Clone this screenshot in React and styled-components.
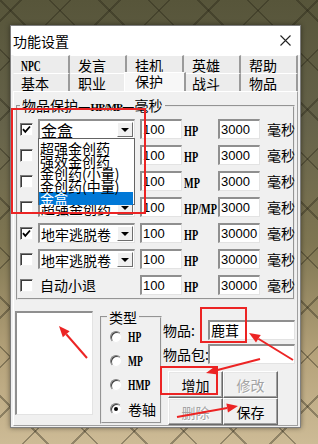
import React from 'react'
import styled, { createGlobalStyle } from 'styled-components'

const CJK = '"Noto Sans CJK SC", "Noto Sans", sans-serif'
const LATIN = '"Liberation Sans", Arial, sans-serif'
const BITMAP = '"Liberation Serif", "Times New Roman", serif'
const RED = '#ec2424'

const GlobalStyle = createGlobalStyle`
  html, body { margin: 0; padding: 0; }
  body {
    width: 318px;
    height: 444px;
    overflow: hidden;
    font-family: ${CJK};
    color: #000;
    background:
      repeating-linear-gradient(45deg, transparent 0 33px, rgba(35, 32, 18, 0.35) 33px 35px),
      repeating-linear-gradient(-45deg, transparent 0 33px, rgba(35, 32, 18, 0.35) 33px 35px),
      linear-gradient(180deg, #57553a 0%, #66634a 28%, #7f7652 55%, #b5a27a 80%, #cdbb96 100%);
  }
`

const Page = styled.div`
  position: relative;
  box-sizing: border-box;
  width: 318px;
  height: 444px;
  padding: 25px 0 0 10px;
`

const Window = styled.div`
  box-sizing: border-box;
  width: 291px;
  height: 403px;
  display: flex;
  flex-direction: column;
  background: #f0f0f0;
  border: 1px solid #7f7f7f;
  box-shadow: 0 0 5px rgba(0, 0, 0, 0.45);
`

const TitleBar = styled.div`
  flex: none;
  height: 29px;
  display: flex;
  align-items: center;
  justify-content: space-between;
  padding: 0 9px 0 2px;
  background: #fff;
`

const Title = styled.div`
  font-size: 14px;
  line-height: 16px;
  margin-top: 1px;
`

const Tabs = styled.div`
  flex: none;
  padding: 0 2px;
`

const TabRow = styled.div`
  display: flex;
  height: 18px;
`

const Tab = styled.div`
  position: relative;
  z-index: ${p => (p.$active ? 1 : 0)};
  box-sizing: border-box;
  flex: none;
  width: ${p => (p.$active ? 62 : 57)}px;
  height: ${p => (p.$active ? 19 : 18)}px;
  margin: ${p => (p.$active ? '-1px -2px 0 -3px' : '0')};
  padding: ${p => (p.$active ? '0 0 0 10px' : '1px 0 0 7px')};
  border-top: 1px solid #fff;
  border-left: 1px solid ${p => (p.$active ? '#fff' : 'transparent')};
  border-right: 2px solid #9a9a9a;
  background: ${p => (p.$active ? '#f7f7f7' : '#ececec')};
  font-size: 14px;
  line-height: 16px;
  white-space: nowrap;
`

const Latin = styled.span`
  display: inline-block;
  font-family: ${BITMAP};
  font-weight: bold;
  font-size: ${p => p.$size || 15}px;
  line-height: 15px;
  white-space: nowrap;
  transform: scaleX(0.68);
  transform-origin: left center;
`

const SmallLatin = styled.span`
  font-family: ${BITMAP};
  font-weight: bold;
  font-size: 11px;
  letter-spacing: -0.8px;
`

const Panel = styled.div`
  flex: 1;
  margin: 0 2px 3px;
  padding: 0 2px;
  border: 1px solid;
  border-color: #fff #a0a0a0 #a0a0a0 #fff;
`

const Group = styled.fieldset`
  margin: 5px 0 0;
  padding: 1px 0 0 2px;
  border: 2px groove #e8e8e8;
  min-width: 0;
`

const Legend = styled.legend`
  padding: 0 2px;
  margin-left: ${p => p.$shift || 0}px;
  font-size: 14px;
  line-height: 16px;
  white-space: nowrap;
`

const Row = styled.div`
  display: flex;
  align-items: center;
  height: 26px;
  white-space: nowrap;
`

const CheckBox = styled.span`
  box-sizing: border-box;
  flex: none;
  width: 13px;
  height: 13px;
  margin-right: 5px;
  display: flex;
  align-items: center;
  justify-content: center;
  background: #fff;
  border: 1px solid;
  border-color: #7a7a7a #f2f2f2 #f2f2f2 #7a7a7a;
  box-shadow: inset 1px 1px 0 #3c3c3c;
`

const Combo = styled.div`
  position: relative;
  box-sizing: border-box;
  flex: none;
  width: 97px;
  height: 20px;
  margin-right: 5px;
  display: flex;
  align-items: center;
  justify-content: space-between;
  padding: 0 1px;
  background: #fff;
  border-style: solid;
  border-width: 2px 1px 1px 2px;
  border-color: #8f8f8f #e3e3e3 #e3e3e3 #8f8f8f;
  font-size: ${p => p.$size || 14}px;
  line-height: 16px;
  white-space: nowrap;
`

const ComboButton = styled.span`
  box-sizing: border-box;
  flex: none;
  width: 16px;
  height: 15px;
  display: flex;
  align-items: center;
  justify-content: center;
  background: #f0f0f0;
  border: 1px solid;
  border-color: #fff #6e6e6e #6e6e6e #fff;

  &::after {
    content: '';
    border-top: 4px solid #000;
    border-left: 4px solid transparent;
    border-right: 4px solid transparent;
  }
`

const DropList = styled.div`
  position: absolute;
  z-index: 5;
  top: 100%;
  left: -2px;
  box-sizing: border-box;
  width: 97px;
  height: 67px;
  padding-top: 3px;
  background: #fff;
  border: 1px solid #646464;
`

const DropItem = styled.div`
  height: 12.5px;
  margin-right: 1px;
  padding-left: 1px;
  font-size: 14px;
  line-height: 12.5px;
  white-space: nowrap;
  background: ${p => (p.$selected ? '#0078d7' : 'transparent')};
  color: ${p => (p.$selected ? '#fff' : '#000')};
`

const Field = styled.div`
  box-sizing: border-box;
  flex: none;
  width: ${p => p.$w}px;
  height: ${p => p.$h || 20}px;
  padding-left: 1px;
  background: #fff;
  border-style: solid;
  border-width: 2px 1px 1px 2px;
  border-color: #8f8f8f #e3e3e3 #e3e3e3 #8f8f8f;
  font-family: ${p => (p.$cjk ? CJK : LATIN)};
  font-size: ${p => (p.$cjk ? 14 : 13)}px;
  line-height: 17px;
  white-space: nowrap;
`

const Unit = styled.span`
  box-sizing: border-box;
  flex: none;
  width: 36px;
  padding-left: 2px;
  overflow: visible;
  white-space: nowrap;
`

const Ms = styled.span`
  flex: none;
  margin-left: 7px;
  font-size: 14px;
  line-height: 16px;
  white-space: nowrap;
`

const RowLabel = styled.span`
  box-sizing: border-box;
  flex: none;
  width: 97px;
  margin-right: 5px;
  padding-left: 2px;
  font-size: 14px;
  line-height: 16px;
`

const Bottom = styled.div`
  display: flex;
  align-items: flex-start;
  margin-top: 9px;
`

const ListBox = styled.div`
  box-sizing: border-box;
  flex: none;
  width: 78px;
  height: 104px;
  margin: 2px 0 0 -1px;
  background: #fff;
  border-style: solid;
  border-width: 2px 1px 1px 2px;
  border-color: #8f8f8f #e3e3e3 #e3e3e3 #8f8f8f;
`

const TypeGroup = styled.fieldset`
  box-sizing: border-box;
  flex: none;
  width: 62px;
  margin: 0 0 0 7px;
  padding: 0 0 1px 8px;
  border: 2px groove #e8e8e8;
  min-width: 0;
`

const RadioRow = styled.div`
  display: flex;
  align-items: center;
  height: 24px;
  font-size: 14px;
  line-height: 16px;
  white-space: nowrap;
`

const Radio = styled.span`
  box-sizing: border-box;
  flex: none;
  width: 12px;
  height: 12px;
  margin-right: 6px;
  border-radius: 50%;
  display: flex;
  align-items: center;
  justify-content: center;
  background: #fff;
  border: 1px solid;
  border-color: #808080 #f0f0f0 #f0f0f0 #808080;
  box-shadow: inset 1px 1px 0 #404040;

  &::after {
    content: '';
    display: ${p => (p.$on ? 'block' : 'none')};
    width: 4px;
    height: 4px;
    border-radius: 50%;
    background: #000;
  }
`

const RightPane = styled.div`
  flex: none;
  width: 133px;
  margin: 11px 0 0 1px;
  display: flex;
  flex-direction: column;
`

const FieldRow = styled.div`
  display: flex;
  align-items: center;
  margin-top: ${p => p.$gap || 0}px;
`

const FieldLabel = styled.span`
  flex: none;
  width: 45px;
  font-size: 14px;
  line-height: 16px;
  white-space: nowrap;
`

const ButtonGrid = styled.div`
  display: grid;
  grid-template-columns: 55px 55px;
  grid-template-rows: 27px 27px;
  margin: 7px 0 0 5px;
`

const Button = styled.div`
  box-sizing: border-box;
  display: flex;
  align-items: center;
  justify-content: center;
  background: #f0f0f0;
  border: 1px solid;
  border-color: #fff #6a6a6a #6a6a6a #fff;
  box-shadow: inset -1px -1px 0 #a0a0a0, inset 1px 1px 0 #e6e6e6;
  font-size: 14px;
  line-height: 16px;
  color: ${p => (p.$disabled ? '#a3a3a3' : '#000')};
  text-shadow: ${p => (p.$disabled ? '1px 1px 0 #fff' : 'none')};
`

const Mark = styled.div`
  position: absolute;
  z-index: 10;
  left: ${p => p.$x}px;
  top: ${p => p.$y}px;
  width: ${p => p.$w}px;
  height: ${p => p.$h}px;
  box-sizing: border-box;
  border: 2px solid ${RED};
  pointer-events: none;
`

const Overlay = styled.svg`
  position: absolute;
  z-index: 11;
  left: 0;
  top: 0;
  pointer-events: none;
`

const Arrow = ({ from, to }) => {
  const [x1, y1] = from
  const [x2, y2] = to
  const len = Math.hypot(x2 - x1, y2 - y1)
  const ux = (x2 - x1) / len
  const uy = (y2 - y1) / len
  const bx = x2 - ux * 11
  const by = y2 - uy * 11
  const head = `${x2},${y2} ${bx - uy * 4.5},${by + ux * 4.5} ${bx + uy * 4.5},${by - ux * 4.5}`
  return (
    <g>
      <line x1={x1} y1={y1} x2={bx} y2={by} stroke={RED} strokeWidth="2" />
      <polygon points={head} fill={RED} />
    </g>
  )
}

const CloseIcon = () => (
  <svg width="11" height="11" viewBox="0 0 11 11">
    <path d="M0.5 0.5 L10.5 10.5 M10.5 0.5 L0.5 10.5" stroke="#222" strokeWidth="1.1" />
  </svg>
)

const Tick = () => (
  <svg width="9" height="9" viewBox="0 0 9 9">
    <path d="M1 4.2 L3.3 6.8 L8 1.5" stroke="#000" strokeWidth="1.8" fill="none" />
  </svg>
)

const drugs = ['超强金创药', '强效金创药', '金创药(小量)', '金创药(中量)', '金盒']

const rows = [
  { checked: true, item: '金盒', big: true, hp: '100', unit: 'HP', ms: '3000', open: true },
  { checked: false, item: '', hp: '100', unit: 'HP', ms: '3000' },
  { checked: false, item: '', hp: '100', unit: 'MP', ms: '3000' },
  { checked: false, item: '超强金创药', hp: '100', unit: 'HP/MP', ms: '3000' },
  { checked: true, item: '地牢逃脱卷', hp: '100', unit: 'HP', ms: '30000' },
  { checked: false, item: '地牢逃脱卷', hp: '100', unit: 'HP', ms: '30000' },
  { checked: false, label: '自动小退', hp: '100', unit: 'HP', ms: '30000' },
]

const tabsTop = ['NPC', '发言', '挂机', '英雄', '帮助']
const tabsBottom = ['基本', '职业', '保护', '战斗', '物品']

const types = [
  { name: 'HP', latin: true },
  { name: 'MP', latin: true },
  { name: 'HMP', latin: true },
  { name: '卷轴', on: true },
]

export default function App() {
  return (
    <Page>
      <GlobalStyle />
      <Window>
        <TitleBar>
          <Title>功能设置</Title>
          <CloseIcon />
        </TitleBar>
        <Tabs>
          <TabRow>
            {tabsTop.map(t => (
              <Tab key={t}>{t === 'NPC' ? <Latin $size={14}>NPC</Latin> : t}</Tab>
            ))}
          </TabRow>
          <TabRow>
            {tabsBottom.map(t => (
              <Tab key={t} $active={t === '保护'}>{t}</Tab>
            ))}
          </TabRow>
        </Tabs>
        <Panel>
          <Group>
            <Legend>
              物品保护—<SmallLatin>HP/MP</SmallLatin>—毫秒
            </Legend>
            {rows.map((r, i) => (
              <Row key={i}>
                <CheckBox>{r.checked && <Tick />}</CheckBox>
                {r.label ? (
                  <RowLabel>{r.label}</RowLabel>
                ) : (
                  <Combo $size={r.big ? 16 : 14}>
                    <span>{r.item}</span>
                    <ComboButton />
                    {r.open && (
                      <DropList>
                        {drugs.map(d => (
                          <DropItem key={d} $selected={d === '金盒'}>{d}</DropItem>
                        ))}
                      </DropList>
                    )}
                  </Combo>
                )}
                <Field $w={42}>{r.hp}</Field>
                <Unit>
                  <Latin>{r.unit}</Latin>
                </Unit>
                <Field $w={42}>{r.ms}</Field>
                <Ms>毫秒</Ms>
              </Row>
            ))}
          </Group>
          <Bottom>
            <ListBox />
            <TypeGroup>
              <Legend $shift={-3}>类型</Legend>
              {types.map(t => (
                <RadioRow key={t.name}>
                  <Radio $on={t.on} />
                  {t.latin ? <Latin $size={14}>{t.name}</Latin> : t.name}
                </RadioRow>
              ))}
            </TypeGroup>
            <RightPane>
              <FieldRow>
                <FieldLabel>物品:</FieldLabel>
                <Field $w={87} $cjk>鹿茸</Field>
              </FieldRow>
              <FieldRow $gap={4}>
                <FieldLabel>物品包:</FieldLabel>
                <Field $w={87} />
              </FieldRow>
              <ButtonGrid>
                <Button>增加</Button>
                <Button $disabled>修改</Button>
                <Button $disabled>删除</Button>
                <Button>保存</Button>
              </ButtonGrid>
            </RightPane>
          </Bottom>
        </Panel>
      </Window>

      <Mark $x={11} $y={108} $w={135} $h={106} />
      <Mark $x={200} $y={307} $w={47} $h={36} />
      <Mark $x={160} $y={366} $w={58} $h={29} />
      <Overlay width="318" height="444" viewBox="0 0 318 444">
        <Arrow from={[87, 358]} to={[59, 326]} />
        <Arrow from={[293, 360]} to={[249, 333]} />
        <Arrow from={[260, 359]} to={[206, 373]} />
        <Arrow from={[177, 417]} to={[238, 406]} />
      </Overlay>
    </Page>
  )
}
